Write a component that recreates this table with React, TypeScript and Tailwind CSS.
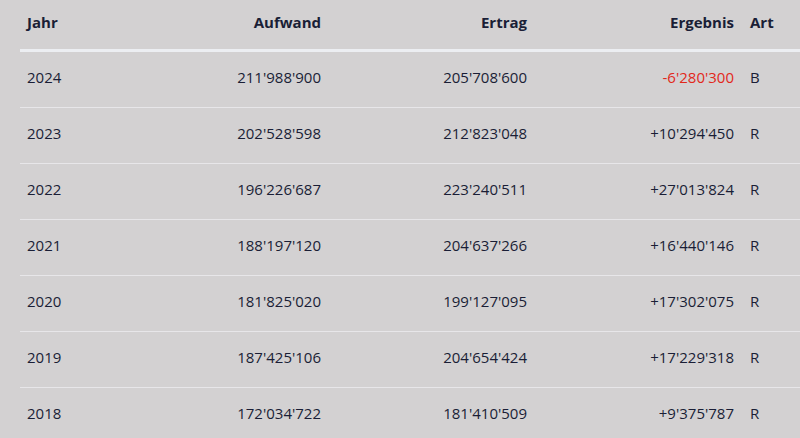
const rows: [string, string, string, string, string][] = [
  ["2024", "211'988'900", "205'708'600", "-6'280'300", "B"],
  ["2023", "202'528'598", "212'823'048", "+10'294'450", "R"],
  ["2022", "196'226'687", "223'240'511", "+27'013'824", "R"],
  ["2021", "188'197'120", "204'637'266", "+16'440'146", "R"],
  ["2020", "181'825'020", "199'127'095", "+17'302'075", "R"],
  ["2019", "187'425'106", "204'654'424", "+17'229'318", "R"],
  ["2018", "172'034'722", "181'410'509", "+9'375'787", "R"],
];

const cols = "grid grid-cols-[140px_169px_206px_207px_100px]";

export default function App() {
  return (
    <div className="h-[438px] w-[800px] overflow-hidden bg-[#d3d1d2] pl-[20px] font-['Open_Sans',sans-serif] text-[15px] text-[#1a1e36]">
      <div className="w-[822px]">
        <div className={`${cols} h-[52px] items-center pb-[5px] font-bold border-b-[3px] border-[#eceef2]`}>
          <div className="pl-[7px]">Jahr</div>
          <div className="pr-[8px] text-right">Aufwand</div>
          <div className="pr-[8px] text-right">Ertrag</div>
          <div className="pr-[8px] text-right">Ergebnis</div>
          <div className="pl-[8px]">Art</div>
        </div>
        {rows.map((r) => (
          <div key={r[0]} className={`${cols} h-[56px] items-center pb-[5px] border-b border-[#e7e6e9]`}>
            <div className="pl-[7px]">{r[0]}</div>
            <div className="pr-[8px] text-right">{r[1]}</div>
            <div className="pr-[8px] text-right">{r[2]}</div>
            <div className={`pr-[8px] text-right ${r[3].startsWith("-") ? "text-[#e2281b]" : ""}`}>{r[3]}</div>
            <div className="pl-[8px]">{r[4]}</div>
          </div>
        ))}
      </div>
    </div>
  );
}
